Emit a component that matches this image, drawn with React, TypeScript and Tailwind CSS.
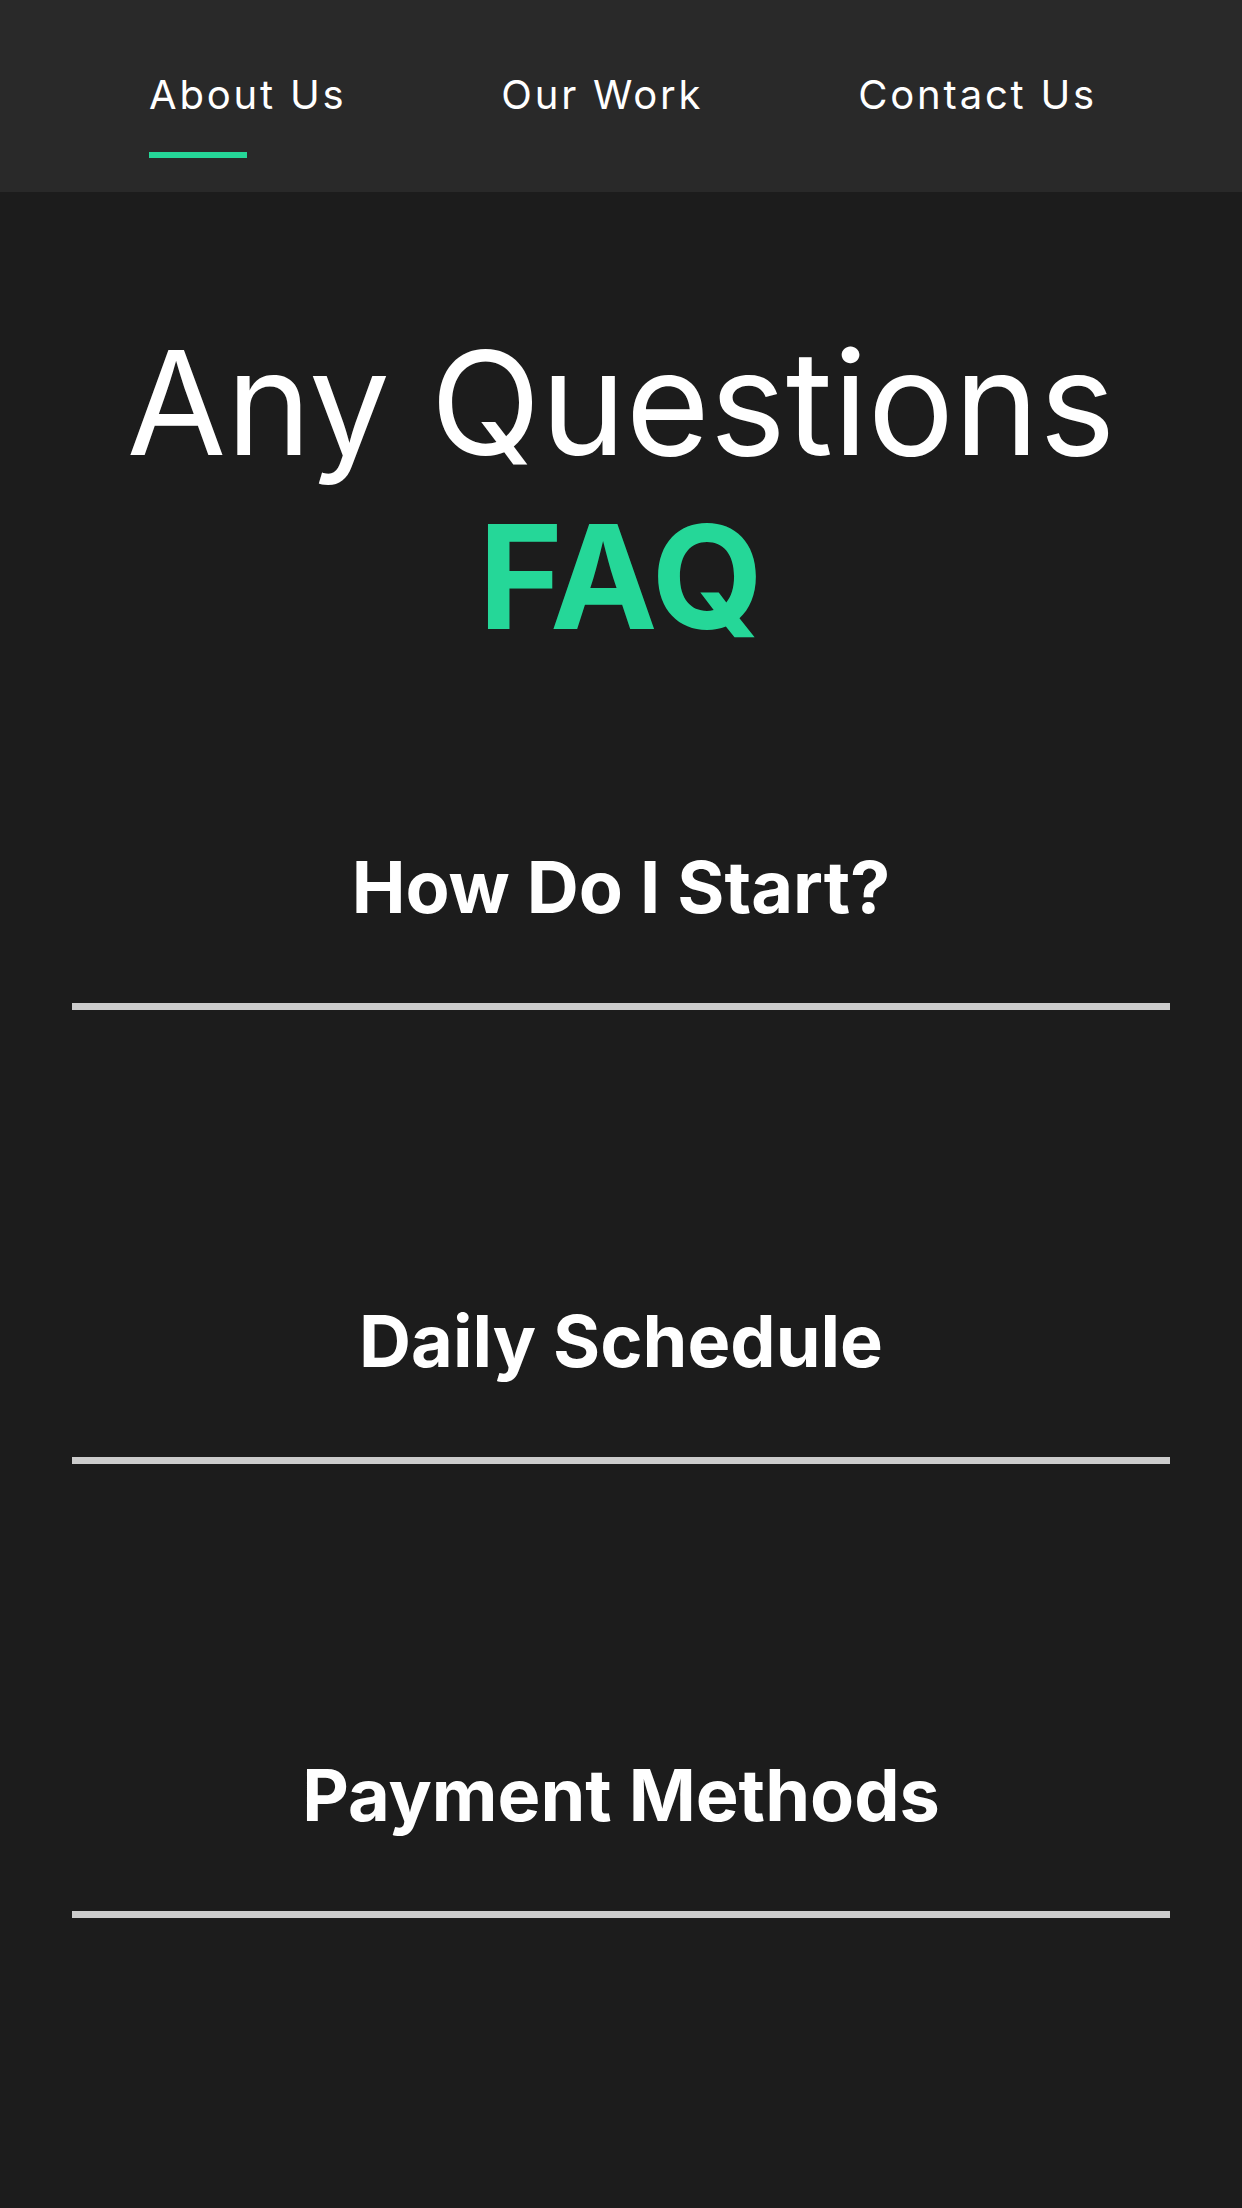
import React from "react";

const navItems = [
  { label: "About Us", active: true },
  { label: "Our Work", active: false },
  { label: "Contact Us", active: false },
];

const faqs = ["How Do I Start?", "Daily Schedule", "Payment Methods"];

export default function App() {
  return (
    <div
      className="min-h-[2208px] w-full bg-[#1c1c1c] text-white"
      style={{ fontFamily: "Inter, 'Noto Sans', sans-serif" }}
    >
      <header className="flex h-[192px] justify-center gap-[155px] bg-[#292929] pt-[71px] pl-[4px]">
        {navItems.map((item) => (
          <div key={item.label} className="flex flex-col">
            <span className="text-[40px] leading-[48px] tracking-[0.07em] text-white">
              {item.label}
            </span>
            {item.active && (
              <span className="mt-[33px] h-[6px] w-[98px] bg-[#25d798]" />
            )}
          </div>
        ))}
      </header>

      <section className="mt-[124px] flex flex-col items-center text-center">
        <h1 className="text-[144px] leading-[174px] font-normal text-white">
          Any Questions
        </h1>
        <h2 className="text-[144px] leading-[174px] font-bold text-[#25d798]">
          FAQ
        </h2>
      </section>

      <section className="mt-[180px] flex flex-col px-[72px]">
        {faqs.map((q) => (
          <div key={q} className="mb-[288px] flex flex-col">
            <h3 className="text-center text-[72px] leading-[86px] font-bold text-white">
              {q}
            </h3>
            <div className="mt-[73px] h-[7px] w-full bg-[#cccccc]" />
          </div>
        ))}
      </section>
    </div>
  );
}
